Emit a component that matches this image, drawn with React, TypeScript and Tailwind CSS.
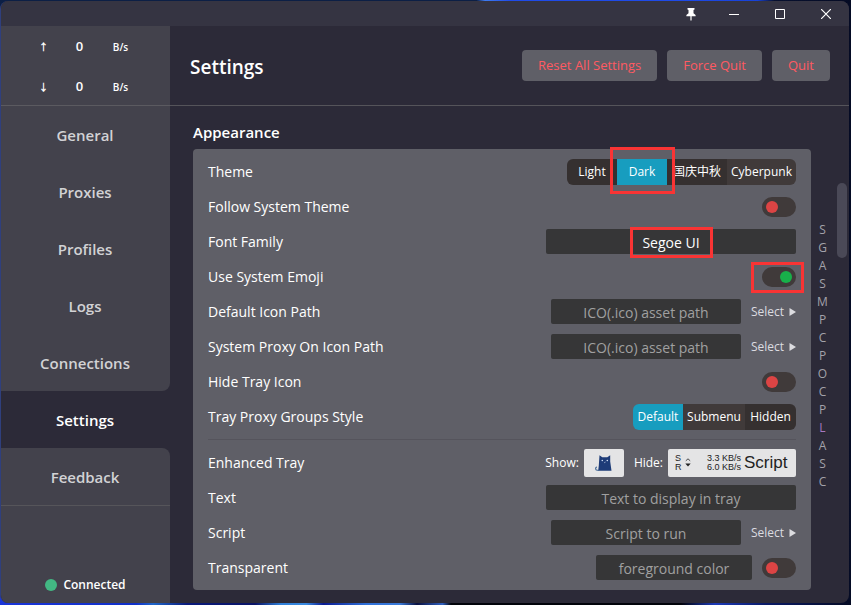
import React, { useState } from "react";

const NAV = ["General", "Proxies", "Profiles", "Logs", "Connections", "Settings", "Feedback"];
const ACTIVE = NAV.indexOf("Settings");
const INDEX = ["S", "G", "A", "S", "M", "P", "C", "P", "O", "C", "P", "L", "A", "S", "C"];

function navStyle(index: number) {
  if (index === ACTIVE) return "bg-[#2c2a38] text-white";
  if (index === ACTIVE - 1) return "rounded-br-lg bg-[#43424c] text-[#d2d2d5]";
  if (index === ACTIVE + 1) return "rounded-tr-lg bg-[#43424c] text-[#d2d2d5]";
  return "bg-[#43424c] text-[#d2d2d5]";
}

function Highlight({ className }: { className: string }) {
  return <span aria-hidden="true" className={`pointer-events-none absolute z-10 border-3 border-[#f93434] ${className}`} />;
}

function Speed({ arrow }: { arrow: string }) {
  return (
    <div className="grid h-10 grid-cols-[36px_36px_46px] items-center justify-center text-center font-semibold text-white">
      <span className="text-[10px]">{arrow}</span>
      <span className="text-[13px]">0</span>
      <span className="text-[10px]">B/s</span>
    </div>
  );
}

function Sidebar() {
  return (
    <aside className="flex w-[169px] shrink-0 flex-col">
      <div className="h-20 border-b border-[#5b5a60] bg-[#43424c] pt-px pr-[2px]">
        <Speed arrow="↑" />
        <Speed arrow="↓" />
      </div>
      <nav className="flex flex-col">
        {NAV.map((name, i) => (
          <a key={name} href="#" className={`flex h-[57px] items-center justify-center pt-[2px] pr-px text-[15px] font-semibold ${navStyle(i)}`}>
            {name}
          </a>
        ))}
      </nav>
      <div className="flex flex-1 flex-col justify-end border-t border-[#56555a] bg-[#43424c]">
        <div className="flex h-9 items-center justify-center gap-[6px] text-xs font-semibold text-white">
          <span className="size-3 rounded-full bg-[#42b883]" />
          Connected
        </div>
      </div>
    </aside>
  );
}

function TitleBar() {
  return (
    <div className="flex h-[25px] items-center justify-end bg-[#353442] pt-px text-white">
      <button aria-label="Pin window" className="flex h-full w-10 items-center justify-center">
        <svg width="10" height="13" viewBox="0 0 10 13" fill="currentColor">
          <path d="M1.500 0h7v1.500L7.500 2v3.200L9.600 7v1.200H5.600V12L5 13l-.6-1V8.200H.4V7l2.100-1.800V2l-1-.5z" />
        </svg>
      </button>
      <button aria-label="Minimize" className="flex h-full w-[46px] items-center justify-center">
        <svg width="10" height="10" viewBox="0 0 10 10" stroke="currentColor"><path d="M0 5.500h10" /></svg>
      </button>
      <button aria-label="Maximize" className="flex h-full w-[46px] items-center justify-center">
        <svg width="10" height="10" viewBox="0 0 10 10" fill="none" stroke="currentColor"><path d="M.5.5h9v9h-9z" /></svg>
      </button>
      <button aria-label="Close" className="flex h-full w-[46px] items-center justify-center">
        <svg width="10" height="10" viewBox="0 0 10 10" stroke="currentColor" strokeWidth="1.200"><path d="M0 0l10 10M10 0L0 10" /></svg>
      </button>
    </div>
  );
}

function DangerButton({ children }: { children: React.ReactNode }) {
  return <button className="h-[31px] rounded-sm bg-[#5f5f67] px-4 text-[13px] text-[#ff5a62]">{children}</button>;
}

function Row({ label, htmlFor, children }: { label: string; htmlFor?: string; children: React.ReactNode }) {
  return (
    <div className="flex h-[35px] items-center justify-between">
      {htmlFor ? <label htmlFor={htmlFor}>{label}</label> : <span>{label}</span>}
      <div className="flex items-center gap-[10px]">{children}</div>
    </div>
  );
}

function Toggle({ id, on = false }: { id: string; on?: boolean }) {
  return (
    <input
      id={id}
      type="checkbox"
      defaultChecked={on}
      className="flex h-5 w-[34px] appearance-none items-center rounded-full bg-[#403a3a] px-1 before:size-3 before:rounded-full before:bg-[#dc4444] checked:justify-end checked:before:bg-[#18b04a]"
    />
  );
}

function TextBox({ id, width, ...rest }: { id: string; width: string } & React.InputHTMLAttributes<HTMLInputElement>) {
  return (
    <input
      id={id}
      type="text"
      className={`h-[25px] rounded-xs bg-[#363637] px-2 pt-px text-center text-sm text-white outline-none placeholder:text-[#a0a0a0] ${width}`}
      {...rest}
    />
  );
}

function SelectFile() {
  return (
    <button className="flex w-[45px] items-center justify-between text-xs text-[#dcdce0]">
      Select
      <svg width="7" height="8" viewBox="0 0 7 8" fill="currentColor"><path d="M.5 0v8L7 4z" /></svg>
    </button>
  );
}

type Option = { name: string; width: string; light?: boolean };

function Segmented({ label, options, initial }: { label: string; options: Option[]; initial: string }) {
  const [value, setValue] = useState(initial);
  const fill = (o: Option) => (value === o.name ? "bg-[#179dbf]" : o.light ? "bg-[#403a3a]" : "bg-[#353030]");
  return (
    <div role="group" aria-label={label} className="flex h-[26px] text-xs whitespace-nowrap">
      {options.map((o) => (
        <button
          key={o.name}
          aria-pressed={value === o.name}
          onClick={() => setValue(o.name)}
          className={`first:rounded-l-md last:rounded-r-md ${fill(o)} ${o.width}`}
        >
          {o.name}
        </button>
      ))}
    </div>
  );
}

function CatIcon() {
  return (
    <svg width="18" height="16" viewBox="0 0 18 16">
      <path d="M4.500.3 7.300 2.300h5L15.200.3v6.200l1.300 9.200H3.200l.6-5.200z" fill="#1e3c78" />
      <path d="M4 15.200H2.200C.2 15.200.1 12.200 2 12" fill="none" stroke="#3d6390" strokeWidth="1.100" />
      <circle cx="7.300" cy="5.500" r=".8" fill="#cfdcf2" />
      <circle cx="12.300" cy="5.500" r=".8" fill="#cfdcf2" />
      <path d="M9 7l.8.7.8-.7" fill="none" stroke="#cfdcf2" strokeWidth=".6" />
    </svg>
  );
}

function TrayPreview() {
  return (
    <>
      <span className="flex items-center gap-[5px] text-xs">
        Show:
        <span className="flex h-7 w-10 items-center justify-center rounded-xs bg-[#e4e4e5]">
          <CatIcon />
        </span>
      </span>
      <span className="flex items-center gap-[5px] text-xs">
        Hide:
        <span className="flex h-7 w-32 items-center rounded-xs bg-[#e4e4e5] pl-[7px] font-['Liberation_Sans',sans-serif] text-[#222]">
          <span className="w-2 text-[9px] leading-[9px]">
            S<br />R
          </span>
          <svg className="ml-[2px]" width="6" height="9" viewBox="0 0 6 9">
            <path d="M.8 2.800 3 .8l2.200 2" fill="none" stroke="#222" strokeWidth=".8" />
            <path d="M.3 5.500h5.400L3 8.500z" fill="#222" />
          </svg>
          <span className="ml-4 text-[9px] leading-[9px] whitespace-nowrap">
            3.3 KB/s
            <br />
            6.0 KB/s
          </span>
          <span className="ml-[3px] text-[17px] leading-7">Script</span>
        </span>
      </span>
    </>
  );
}

function AppearanceCard() {
  return (
    <section className="min-w-0 flex-1 pt-[14px]">
      <h2 className="h-[29px] text-[15px] leading-6 font-semibold">Appearance</h2>
      <div className="rounded-sm bg-[#5f5f67] px-[15px] py-[5px] text-sm">
        <Row label="Theme">
          <div className="relative">
            <Segmented
              label="Theme"
              initial="Dark"
              options={[
                { name: "Light", width: "w-[50px]" },
                { name: "Dark", width: "w-[50px]" },
                { name: "国庆中秋", width: "w-[60px]" },
                { name: "Cyberpunk", width: "w-[69px]", light: true },
              ]}
            />
            <Highlight className="-top-3 left-[43px] h-[47px] w-[65px]" />
          </div>
        </Row>
        <Row label="Follow System Theme" htmlFor="follow">
          <Toggle id="follow" />
        </Row>
        <Row label="Font Family" htmlFor="font">
          <div className="relative flex justify-center">
            <TextBox id="font" width="w-[250px]" defaultValue="Segoe UI" />
            <Highlight className="-top-[2px] h-[31px] w-[83px]" />
          </div>
        </Row>
        <Row label="Use System Emoji" htmlFor="emoji">
          <div className="relative">
            <Toggle id="emoji" on />
            <Highlight className="-top-[5px] -right-2 h-[31px] w-[53px]" />
          </div>
        </Row>
        <Row label="Default Icon Path" htmlFor="icon">
          <TextBox id="icon" width="w-[190px]" placeholder="ICO(.ico) asset path" />
          <SelectFile />
        </Row>
        <Row label="System Proxy On Icon Path" htmlFor="proxy-icon">
          <TextBox id="proxy-icon" width="w-[190px]" placeholder="ICO(.ico) asset path" />
          <SelectFile />
        </Row>
        <Row label="Hide Tray Icon" htmlFor="hide-tray">
          <Toggle id="hide-tray" />
        </Row>
        <Row label="Tray Proxy Groups Style">
          <Segmented
            label="Tray Proxy Groups Style"
            initial="Default"
            options={[
              { name: "Default", width: "w-[50px]" },
              { name: "Submenu", width: "w-[62px]", light: true },
              { name: "Hidden", width: "w-[51px]" },
            ]}
          />
        </Row>
        <hr className="my-[5px] border-[#55545c]" />
        <Row label="Enhanced Tray">
          <TrayPreview />
        </Row>
        <Row label="Text" htmlFor="tray-text">
          <TextBox id="tray-text" width="w-[250px]" placeholder="Text to display in tray" />
        </Row>
        <Row label="Script" htmlFor="script">
          <TextBox id="script" width="w-[190px]" placeholder="Script to run" />
          <SelectFile />
        </Row>
        <Row label="Transparent" htmlFor="transparent">
          <TextBox id="foreground" width="w-[156px]" placeholder="foreground color" aria-label="Foreground color" />
          <Toggle id="transparent" />
        </Row>
      </div>
    </section>
  );
}

export default function App() {
  return (
    <div className="flex min-h-screen bg-[#050b24] bg-[linear-gradient(90deg,#0c1f45_0%,#0c1f45_56%,#3f7bf0_57%,#1f4be8_60%,#1f4be8_80%,#1742d8_89%,#07102f_91%,#050b24_100%),linear-gradient(90deg,#1a35d8_0%,#1030c8_16%,#1f66c8_18%,#0a1a7a_22%,#0a1466_30%,#2f7fd8_33%,#3a8ae0_36%,#0a1a90_38%,#2f70d8_43%,#3a7ad8_47%,#0a1040_49%,#2f60c0_52%,#02030a_53%,#02030a_80%,#1c3ab8_84%,#0a1a66_90%,#050b24_100%)] bg-size-[100%_50%] bg-position-[top,bottom] bg-no-repeat pt-px pr-[2px] pb-[2px] font-['Open_Sans','Noto_Sans_CJK_SC',sans-serif] text-white">
      <div className="flex flex-1 flex-col overflow-hidden rounded-lg border-l border-[#2f3f7d] bg-[#2c2a38]">
        <TitleBar />
        <div className="flex flex-1">
          <Sidebar />
          <main className="flex min-w-0 flex-1 flex-col">
            <header className="flex h-20 items-center justify-between border-b border-[#55545a] pr-[19px] pl-5">
              <h1 className="pt-1 text-[19px] font-semibold">Settings</h1>
              <div className="flex gap-[10px]">
                <DangerButton>Reset All Settings</DangerButton>
                <DangerButton>Force Quit</DangerButton>
                <DangerButton>Quit</DangerButton>
              </div>
            </header>
            <div className="flex flex-1 pr-[2px] pl-[23px]">
              <AppearanceCard />
              <nav aria-label="Sections" className="flex w-[26px] flex-col justify-center pt-[2px] pr-[3px] text-center text-xs text-[#a3a2aa]">
                {INDEX.map((letter, i) => (
                  <a key={i} href="#" className={`h-[18px] leading-[18px] ${letter === "L" ? "text-[#a678c0]" : ""}`}>
                    {letter}
                  </a>
                ))}
              </nav>
              <div className="w-[10px] pt-[77px]">
                <div className="h-[75px] rounded-full bg-[#4a4957]" />
              </div>
            </div>
          </main>
        </div>
      </div>
    </div>
  );
}
